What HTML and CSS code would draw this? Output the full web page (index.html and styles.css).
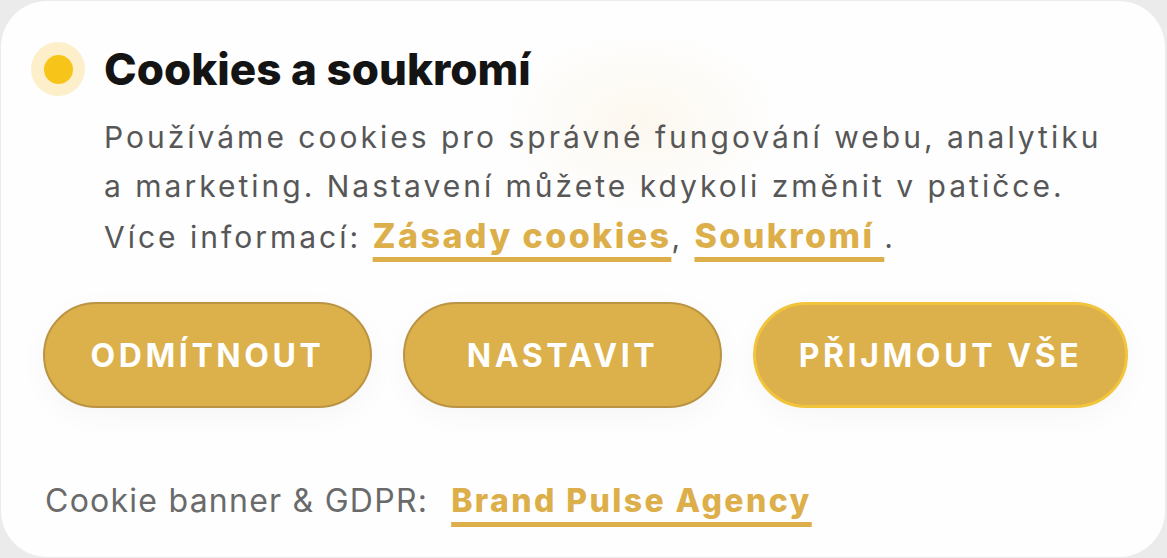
FILE: index.html
```html
<!DOCTYPE html>
<html lang="cs">
<head>
<meta charset="utf-8">
<link rel="stylesheet" href="styles.css">
</head>
<body>
<div class="card">
  <div class="head">
    <span class="dot"><span class="dot-core"></span></span>
    <h1 class="title">Cookies a soukromí</h1>
  </div>
  <p class="text"><span>Používáme cookies pro správné fungování webu, analytiku a marketing. Nastavení můžete kdykoli změnit v patičce. </span><span>Více informací: </span><a class="link" href="#">Zásady cookies</a><span>, </span><a class="link" href="#">Soukromí </a><span>.</span></p>
  <div class="actions">
    <button class="btn btn-reject">ODMÍTNOUT</button>
    <button class="btn btn-set">NASTAVIT</button>
    <button class="btn btn-accept">PŘIJMOUT VŠE</button>
  </div>
  <div class="footer">
    <span class="credit">Cookie banner &amp; GDPR:</span>
    <a class="brand" href="#">Brand Pulse Agency</a>
  </div>
</div>
</body>
</html>
```
FILE: styles.css
```css
html, body {
  margin: 0;
  padding: 0;
  background: #ebebeb;
  overflow: hidden;
}
body {
  width: 1167px;
  height: 558px;
  padding: 1px;
  box-sizing: border-box;
  font-family: Inter, "Noto Sans", sans-serif;
}
.card {
  width: 1164px;
  height: 556px;
  box-sizing: border-box;
  background: #fefefe;
  border-radius: 46px;
  padding: 41px 0 0 30px;
  overflow: hidden;
  background-image:
    radial-gradient(ellipse 140px 90px at 640px 120px, rgba(250,240,220,0.45), rgba(255,255,255,0) 100%);
}
.head {
  display: flex;
  align-items: center;
  gap: 19px;
  height: 54px;
}
.dot {
  width: 54px;
  height: 54px;
  border-radius: 50%;
  background: #fcefc9;
  display: flex;
  align-items: center;
  justify-content: center;
  flex: none;
}
.dot-core {
  width: 29px;
  height: 29px;
  border-radius: 50%;
  background: #f7c519;
}
.title {
  margin: 0;
  font-size: 44px;
  line-height: 54px;
  font-weight: 800;
  color: #141414;
  letter-spacing: 0;
}
.text {
  margin: 17px 0 0 73px;
  width: 1015px;
  font-size: 30px;
  line-height: 49px;
  color: #575757;
  letter-spacing: 3px;
}
.link {
  color: #dcaf4b;
  font-weight: 800;
  font-size: 34px;
  letter-spacing: 2.4px;
  text-decoration: underline;
  text-decoration-thickness: 5px;
  text-underline-offset: 9px;
  text-decoration-skip-ink: none;
}
.actions {
  display: flex;
  gap: 31px;
  margin: 40px 0 0 12px;
}
.btn {
  height: 106px;
  border-radius: 53px;
  background: #dcb04b;
  border: 2px solid #bb9443;
  color: #ffffff;
  font-family: Inter, "Noto Sans", sans-serif;
  font-size: 32px;
  font-weight: 700;
  letter-spacing: 3.6px;
  padding: 0;
  box-shadow: 0 8px 30px rgba(0,0,0,0.035);
}
.btn-reject { width: 329px; }
.btn-set { width: 319px; }
.btn-accept { width: 375px; border: 3px solid #f1c43b; }
.footer {
  display: flex;
  align-items: baseline;
  gap: 23px;
  margin: 73px 0 0 14px;
  line-height: 40px;
}
.credit {
  font-weight: 400;
  font-size: 32px;
  color: #6a6a6a;
  letter-spacing: 1.25px;
}
.brand {
  font-weight: 800;
  font-size: 32px;
  color: #dcaf4b;
  letter-spacing: 2.4px;
  text-decoration: underline;
  text-decoration-thickness: 5px;
  text-underline-offset: 10px;
  text-decoration-skip-ink: none;
}
```
